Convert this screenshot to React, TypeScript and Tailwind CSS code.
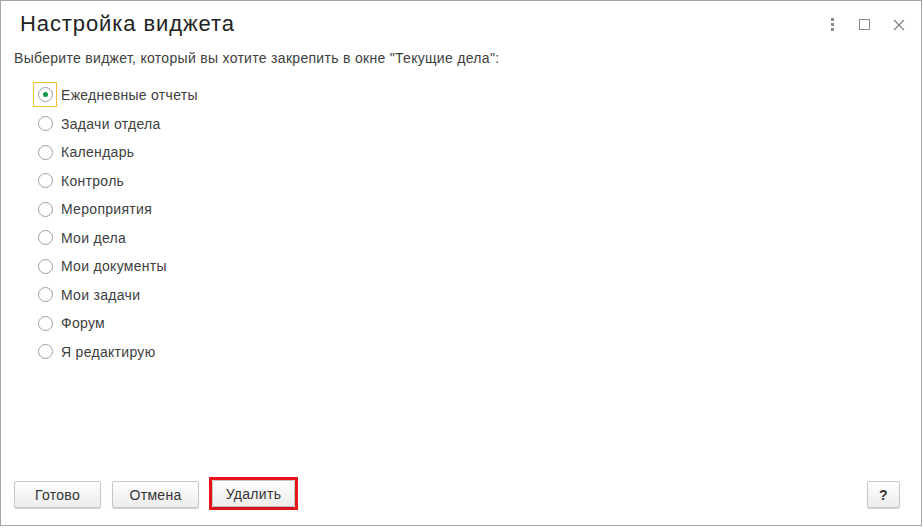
import { useState } from "react";

const widgets = [
  "Ежедневные отчеты",
  "Задачи отдела",
  "Календарь",
  "Контроль",
  "Мероприятия",
  "Мои дела",
  "Мои документы",
  "Мои задачи",
  "Форум",
  "Я редактирую",
];

function Button({ children, className = "" }: { children: React.ReactNode; className?: string }) {
  return (
    <button
      className={`h-[27px] rounded-[2px] border border-[#c6c6c6] bg-gradient-to-b from-white to-[#ececec] text-[14px] leading-[16px] tracking-[0.3px] text-[#333] shadow-[0_1px_1px_rgba(0,0,0,0.18)] ${className}`}
    >
      {children}
    </button>
  );
}

export default function App() {
  const [selected, setSelected] = useState(0);

  return (
    <div className="w-[923px] h-[528px] bg-white font-['Liberation_Sans',Arial,sans-serif]">
      <div className="w-[922px] h-[526px] border border-[#a5a5a5] flex flex-col">
        {/* Header */}
        <div className="h-[49px] flex items-start pl-[19px] pr-[16px] pt-[10px]">
          <h1 className="text-[22px] leading-[25px] tracking-[0.9px] text-[#222] flex-1">
            Настройка виджета
          </h1>
          <div className="flex items-center gap-[21px] pt-[7px]">
            <span className="flex flex-col gap-[2px] items-center w-[3px]">
              <span className="w-[3px] h-[3px] bg-[#8c8c8c]" />
              <span className="w-[3px] h-[3px] bg-[#8c8c8c]" />
              <span className="w-[3px] h-[3px] bg-[#8c8c8c]" />
            </span>
            <span className="ml-[4px] w-[11px] h-[11px] border-[1.5px] border-[#8a8a8a]" />
            <svg width="12" height="12" viewBox="0 0 12 12" className="ml-[2px]">
              <path d="M1 1L11 11M11 1L1 11" stroke="#7a7a7a" strokeWidth="1.1" />
            </svg>
          </div>
        </div>

        {/* Instruction */}
        <p className="pl-[13px] text-[14px] leading-[16px] tracking-[0.3px] text-[#404040]">
          Выберите виджет, который вы хотите закрепить в окне "Текущие дела":
        </p>

        {/* Radio list */}
        <div className="mt-[14.7px] pl-[32px] flex flex-col">
          {widgets.map((w, i) => (
            <label
              key={w}
              className="h-[28.56px] flex items-center gap-[4px] cursor-pointer"
              onClick={() => setSelected(i)}
            >
              <span
                className={`w-[24px] h-[25px] flex items-center justify-center border ${
                  i === selected ? "border-[#f2c230]" : "border-transparent"
                }`}
              >
                <span className="w-[15px] h-[15px] rounded-full border border-[#a0a0a0] bg-white flex items-center justify-center">
                  {i === selected && (
                    <span className="w-[5px] h-[5px] rounded-full bg-[#149a44]" />
                  )}
                </span>
              </span>
              <span className="text-[14px] leading-[16px] tracking-[0.3px] text-[#404040]">{w}</span>
            </label>
          ))}
        </div>

        <div className="flex-1" />

        {/* Footer */}
        <div className="flex items-start pl-[13px] pr-[21px] pb-[15px]">
          <Button className="w-[87px]">Готово</Button>
          <Button className="w-[87px] ml-[11px]">Отмена</Button>
          <div className="ml-[10px] -mt-[4px] border-[3px] border-[#e8141c]">
            <Button className="w-[83px] block">Удалить</Button>
          </div>
          <div className="flex-1" />
          <Button className="w-[33px] font-bold">?</Button>
        </div>
      </div>
    </div>
  );
}
